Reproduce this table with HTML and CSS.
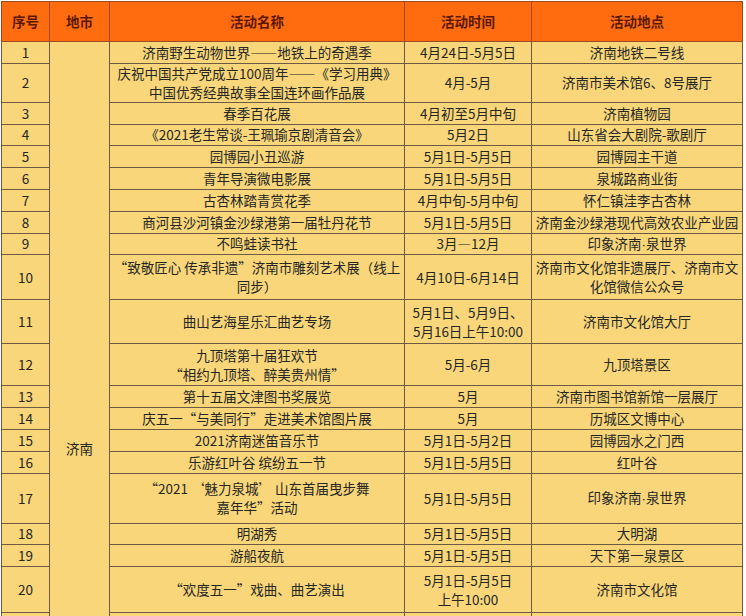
FILE: index.html
```html
<!DOCTYPE html>
<html lang="zh-CN">
<head>
<meta charset="utf-8">
<title>活动表</title>
<link rel="stylesheet" href="styles.css">
</head>
<body>
<table class="events">
  <colgroup>
    <col class="c-no">
    <col class="c-city">
    <col class="c-name">
    <col class="c-time">
    <col class="c-place">
  </colgroup>
  <thead>
    <tr class="head">
      <th>序号</th><th>地市</th><th>活动名称</th><th>活动时间</th><th>活动地点</th>
    </tr>
  </thead>
  <tbody>
    <tr class="s"><td>1</td><td class="city" rowspan="21">济南</td><td>济南野生动物世界——地铁上的奇遇季</td><td>4月24日-5月5日</td><td>济南地铁二号线</td></tr>
    <tr class="t38"><td>2</td><td>庆祝中国共产党成立100周年——《学习用典》<br>中国优秀经典故事全国连环画作品展</td><td>4月-5月</td><td>济南市美术馆6、8号展厅</td></tr>
    <tr class="s"><td>3</td><td>春季百花展</td><td>4月初至5月中旬</td><td>济南植物园</td></tr>
    <tr class="s"><td>4</td><td>《2021老生常谈-王珮瑜京剧清音会》</td><td>5月2日</td><td>山东省会大剧院-歌剧厅</td></tr>
    <tr class="s"><td>5</td><td>园博园小丑巡游</td><td>5月1日-5月5日</td><td>园博园主干道</td></tr>
    <tr class="s"><td>6</td><td>青年导演微电影展</td><td>5月1日-5月5日</td><td>泉城路商业街</td></tr>
    <tr class="s"><td>7</td><td>古杏林踏青赏花季</td><td>4月中旬-5月中旬</td><td>怀仁镇洼李古杏林</td></tr>
    <tr class="s"><td>8</td><td>商河县沙河镇金沙绿港第一届牡丹花节</td><td>5月1日-5月5日</td><td>济南金沙绿港现代高效农业产业园</td></tr>
    <tr class="s"><td>9</td><td>不鸣蛙读书社</td><td>3月—12月</td><td>印象济南<span class="latin">·</span>泉世界</td></tr>
    <tr class="t45"><td>10</td><td>“致敬匠心 传承非遗”济南市雕刻艺术展（线上<br>同步）</td><td>4月10日-6月14日</td><td>济南市文化馆非遗展厅、济南市文<br>化馆微信公众号</td></tr>
    <tr class="t44"><td>11</td><td>曲山艺海星乐汇曲艺专场</td><td>5月1日、5月9日、<br>5月16日上午10:00</td><td>济南市文化馆大厅</td></tr>
    <tr class="t42"><td>12</td><td>九顶塔第十届狂欢节<br>“相约九顶塔、醉美贵州情”</td><td>5月-6月</td><td>九顶塔景区</td></tr>
    <tr class="s"><td>13</td><td>第十五届文津图书奖展览</td><td>5月</td><td>济南市图书馆新馆一层展厅</td></tr>
    <tr class="s"><td>14</td><td>庆五一“与美同行”走进美术馆图片展</td><td>5月</td><td>历城区文博中心</td></tr>
    <tr class="s"><td>15</td><td>2021济南迷笛音乐节</td><td>5月1日-5月2日</td><td>园博园水之门西</td></tr>
    <tr class="s"><td>16</td><td>乐游红叶谷 缤纷五一节</td><td>5月1日-5月5日</td><td>红叶谷</td></tr>
    <tr class="t50"><td>17</td><td>“2021 ‘魅力泉城’ 山东首届曳步舞<br>嘉年华”活动</td><td>5月1日-5月5日</td><td>印象济南<span class="latin">·</span>泉世界</td></tr>
    <tr class="s"><td>18</td><td>明湖秀</td><td>5月1日-5月5日</td><td>大明湖</td></tr>
    <tr class="s"><td>19</td><td>游船夜航</td><td>5月1日-5月5日</td><td>天下第一泉景区</td></tr>
    <tr class="t46"><td>20</td><td>“欢度五一”戏曲、曲艺演出</td><td>5月1日-5月5日<br>上午10:00</td><td>济南市文化馆</td></tr>
    <tr class="rest"><td></td><td></td><td></td><td></td></tr>
  </tbody>
</table>
</body>
</html>
```

FILE: styles.css
```css
html, body {
  margin: 0;
  padding: 0;
  overflow: hidden;
  background: #ffffff;
}
body {
  padding: 1px 0 0 1px;
  font-family: "Noto Sans CJK SC", "Noto Sans", sans-serif;
  font-size: 13.5px;
  color: #262626;
}
.events {
  border-collapse: collapse;
  table-layout: fixed;
  width: 742px;
}
.c-no { width: 48px; }
.c-city { width: 60px; }
.c-name { width: 295px; }
.c-time { width: 127px; }
.c-place { width: 211px; }

.events th,
.events td {
  padding: 0 2px;
  text-align: center;
  vertical-align: middle;
  line-height: 19px;
  white-space: nowrap;
  overflow: hidden;
}
.events td {
  background: #f8d679;
  border: 1px solid #6e5a44;
}
.events th {
  background: #ff6c10;
  border: 1px solid #9c4a22;
  color: #5a1800;
  font-weight: bold;
  height: 39px;
}
.latin {
  font-family: "Liberation Sans", sans-serif;
}
.s { height: 21.8px; }
.t38 { height: 38px; }
.t42 { height: 42px; }
.t44 { height: 44px; }
.t45 { height: 45px; }
.t46 { height: 46px; }
.t50 { height: 50px; }
.rest { height: 242px; }
```
